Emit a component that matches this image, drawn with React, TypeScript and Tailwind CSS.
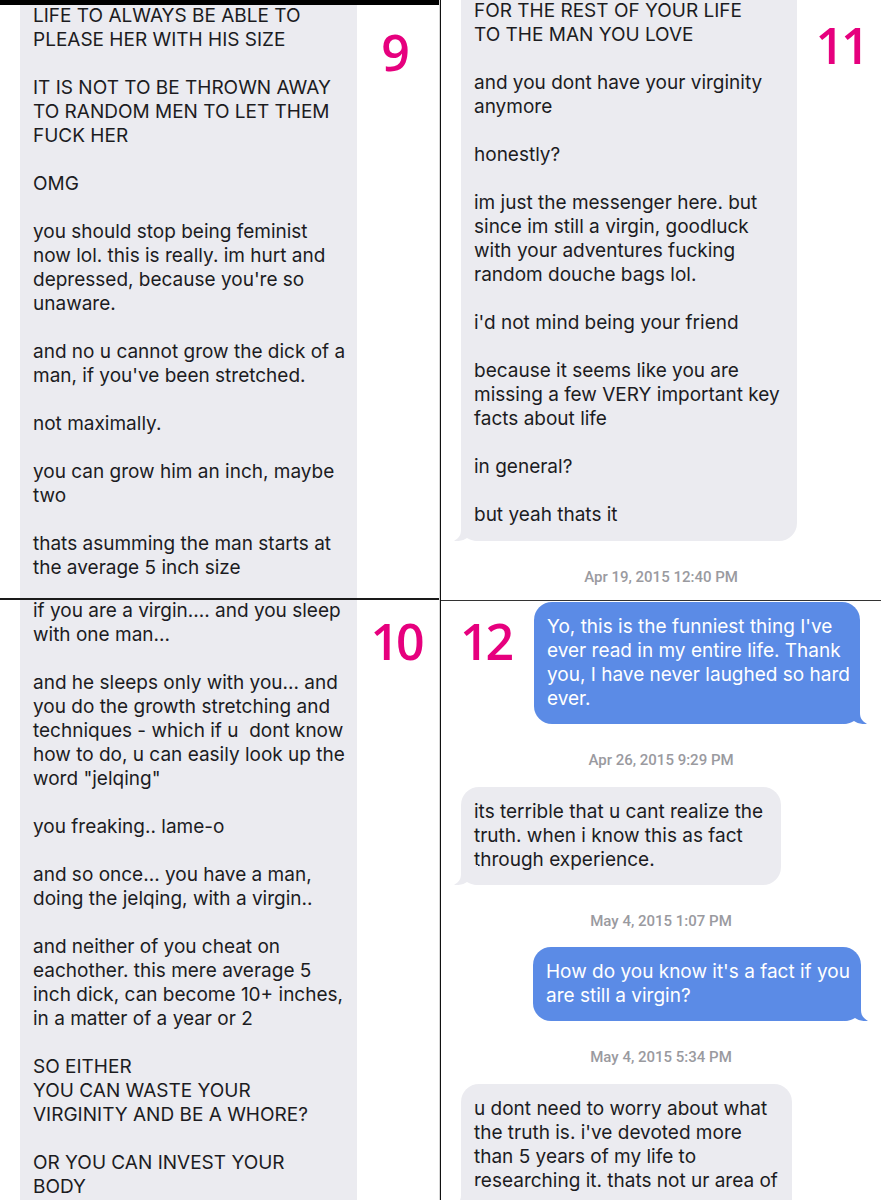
const msgFont = { fontFamily: 'Inter, "Noto Sans", sans-serif' }

const topLeft = `LIFE TO ALWAYS BE ABLE TO
PLEASE HER WITH HIS SIZE

IT IS NOT TO BE THROWN AWAY
TO RANDOM MEN TO LET THEM
FUCK HER

OMG

you should stop being feminist
now lol. this is really. im hurt and
depressed, because you're so
unaware.

and no u cannot grow the dick of a
man, if you've been stretched.

not maximally.

you can grow him an inch, maybe
two

thats asumming the man starts at
the average 5 inch size`

const bottomLeft = `if you are a virgin.... and you sleep
with one man...

and he sleeps only with you... and
you do the growth stretching and
techniques - which if u  dont know
how to do, u can easily look up the
word "jelqing"

you freaking.. lame-o

and so once... you have a man,
doing the jelqing, with a virgin..

and neither of you cheat on
eachother. this mere average 5
inch dick, can become 10+ inches,
in a matter of a year or 2

SO EITHER
YOU CAN WASTE YOUR
VIRGINITY AND BE A WHORE?

OR YOU CAN INVEST YOUR
BODY`

const topRight = `FOR THE REST OF YOUR LIFE
TO THE MAN YOU LOVE

and you dont have your virginity
anymore

honestly?

im just the messenger here. but
since im still a virgin, goodluck
with your adventures fucking
random douche bags lol.

i'd not mind being your friend

because it seems like you are
missing a few VERY important key
facts about life

in general?

but yeah thats it`

function Label({ n }: { n: string }) {
  return (
    <div
      className="text-[50px] leading-none font-semibold tracking-[-3px] text-[#e6007e]"
      style={{ fontFamily: '"Open Sans", sans-serif' }}
    >
      {n}
    </div>
  )
}

function Stamp({ children }: { children: string }) {
  return (
    <div
      className="text-center text-[15px] leading-5 font-medium text-[#9a9a9f]"
      style={{ fontFamily: 'Roboto, "Liberation Sans", sans-serif' }}
    >
      {children}
    </div>
  )
}

function TailLeft() {
  return (
    <svg className="absolute bottom-0 left-[-7px]" width="24" height="20" viewBox="0 0 24 20">
      <path d="M7 0 V9 C7 14 5 17 0 20 C6 20.5 10 19 13 17 C16 19 20 20 24 20 V0 Z" fill="#ebebf0" />
    </svg>
  )
}

function TailRight() {
  return (
    <svg className="absolute bottom-0 right-[-7px]" width="24" height="20" viewBox="0 0 24 20">
      <path d="M17 0 V9 C17 14 19 17 24 20 C18 20.5 14 19 11 17 C8 19 4 20 0 20 V0 Z" fill="#5b8be6" />
    </svg>
  )
}

function GrayBubble({ text, className }: { text: string; className: string }) {
  return (
    <div className={`relative rounded-[18px] bg-[#ebebf0] px-[13px] py-[13px] ${className}`}>
      <div className="whitespace-pre text-[19px] leading-6 text-[#1c1c1f]" style={msgFont}>
        {text}
      </div>
      <TailLeft />
    </div>
  )
}

function BlueBubble({ text, className }: { text: string; className: string }) {
  return (
    <div className={`relative rounded-[18px] bg-[#5b8be6] py-[13px] pl-[13px] pr-3 ${className}`}>
      <div className="whitespace-pre text-[19px] leading-6 text-white" style={msgFont}>
        {text}
      </div>
      <TailRight />
    </div>
  )
}

export default function App() {
  return (
    <div className="flex h-[1200px] w-[881px] overflow-hidden bg-white">
      {/* left half */}
      <div className="flex w-[440px] flex-col border-r border-[#d6d6d6]">
        <div className="h-[5px] bg-black" />
        <div className="flex h-[593px] overflow-hidden">
          <div className="ml-5 w-[337px] shrink-0 overflow-hidden bg-[#ebebf0] pl-[13px]">
            <div className="mt-[-1px] whitespace-pre text-[19px] leading-6 text-[#1c1c1f]" style={msgFont}>
              {topLeft}
            </div>
          </div>
          <div className="flex flex-1 justify-center pt-[22px] pr-2">
            <Label n="9" />
          </div>
        </div>
        <div className="h-[2px] bg-[#1a1a1a]" />
        <div className="flex flex-1 overflow-hidden">
          <div className="ml-5 w-[337px] shrink-0 overflow-hidden bg-[#ebebf0] pl-[13px]">
            <div className="mt-[-1px] whitespace-pre text-[19px] leading-6 text-[#1c1c1f]" style={msgFont}>
              {bottomLeft}
            </div>
          </div>
          <div className="flex flex-1 justify-center pt-[16px] pr-1">
            <Label n="10" />
          </div>
        </div>
      </div>

      <div className="w-px bg-[#111]" />

      {/* right half */}
      <div className="flex flex-1 flex-col">
        <div className="flex h-[600px] flex-col overflow-hidden">
          <div className="flex">
            <div className="relative ml-5 w-[336px] shrink-0 rounded-b-[18px] bg-[#ebebf0] pt-0 pb-[14px] pl-[13px]">
              <div className="mt-[-1px] whitespace-pre text-[19px] leading-6 text-[#1c1c1f]" style={msgFont}>
                {topRight}
              </div>
              <TailLeft />
            </div>
            <div className="flex flex-1 justify-center pt-[20px] pl-1">
              <Label n="11" />
            </div>
          </div>
          <div className="mt-[26px]">
            <Stamp>Apr 19, 2015 12:40 PM</Stamp>
          </div>
        </div>
        <div className="h-px bg-[#333]" />
        <div className="flex flex-1 flex-col overflow-hidden">
          <div className="flex pt-px">
            <div className="flex w-[93px] justify-center pt-[14px] pr-1">
              <Label n="12" />
            </div>
            <BlueBubble
              className="w-[326px]"
              text={`Yo, this is the funniest thing I've
ever read in my entire life. Thank
you, I have never laughed so hard
ever.`}
            />
          </div>
          <div className="mt-[26px]">
            <Stamp>Apr 26, 2015 9:29 PM</Stamp>
          </div>
          <div className="mt-[17px] ml-5 flex">
            <GrayBubble
              className="w-[320px]"
              text={`its terrible that u cant realize the
truth. when i know this as fact
through experience.`}
            />
          </div>
          <div className="mt-[26px]">
            <Stamp>May 4, 2015 1:07 PM</Stamp>
          </div>
          <div className="mt-[16px] flex justify-end pr-5">
            <BlueBubble
              className="w-[328px]"
              text={`How do you know it's a fact if you
are still a virgin?`}
            />
          </div>
          <div className="mt-[26px]">
            <Stamp>May 4, 2015 5:34 PM</Stamp>
          </div>
          <div className="mt-[17px] ml-5 flex">
            <GrayBubble
              className="w-[331px] rounded-b-none"
              text={`u dont need to worry about what
the truth is. i've devoted more
than 5 years of my life to
researching it. thats not ur area of`}
            />
          </div>
        </div>
      </div>
    </div>
  )
}
